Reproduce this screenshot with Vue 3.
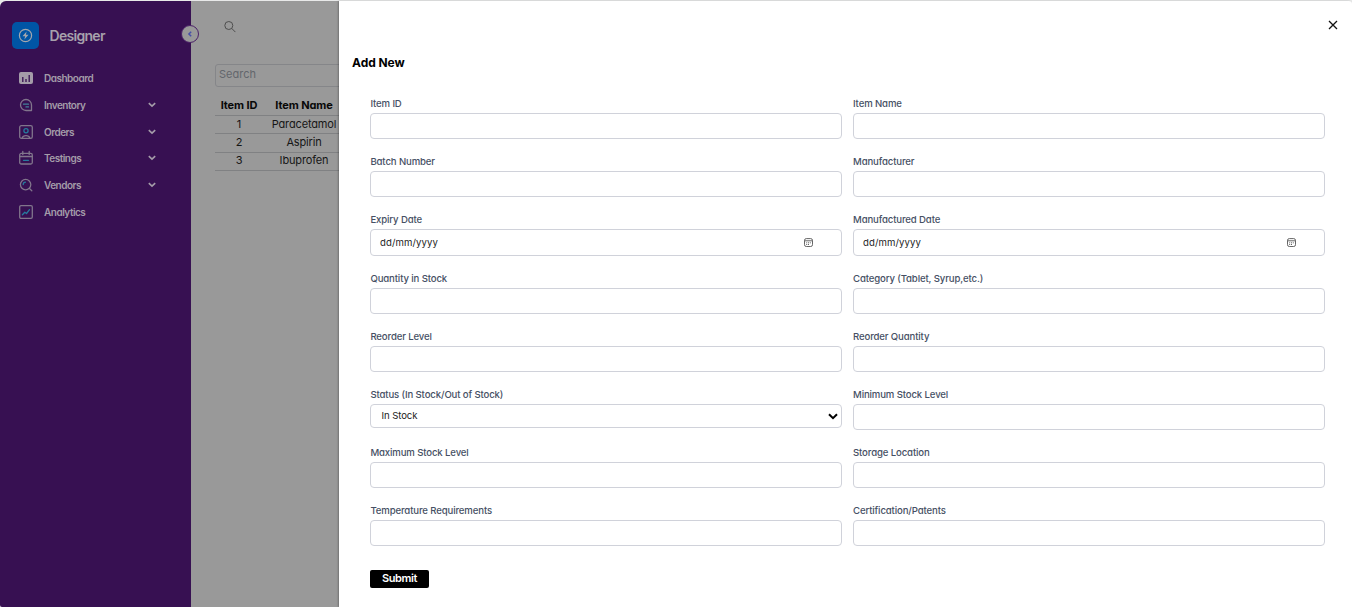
<script setup>
const nav = [
  { name: 'Dashboard', icon: 'dashboard' },
  { name: 'Inventory', icon: 'inventory', more: true },
  { name: 'Orders', icon: 'orders', more: true },
  { name: 'Testings', icon: 'testings', more: true },
  { name: 'Vendors', icon: 'vendors', more: true },
  { name: 'Analytics', icon: 'analytics' },
]
const items = ['Paracetamol', 'Aspirin', 'Ibuprofen']
const fields = [
  { label: 'Item ID' },
  { label: 'Item Name' },
  { label: 'Batch Number' },
  { label: 'Manufacturer' },
  { label: 'Expiry Date', type: 'date' },
  { label: 'Manufactured Date', type: 'date' },
  { label: 'Quantity in Stock' },
  { label: 'Category (Tablet, Syrup,etc.)' },
  { label: 'Reorder Level' },
  { label: 'Reorder Quantity' },
  { label: 'Status (In Stock/Out of Stock)', type: 'select' },
  { label: 'Minimum Stock Level' },
  { label: 'Maximum Stock Level' },
  { label: 'Storage Location' },
  { label: 'Temperature Requirements' },
  { label: 'Certification/Patents' },
]
</script>

<template>
  <div class="page">
    <aside class="sidebar">
      <div class="brand">
        <span class="logo">
          <svg width="15" height="15" viewBox="0 0 15 15" fill="none" stroke="#a4a7ad">
            <circle cx="7.5" cy="7.5" r="6.1" stroke-width="1.2" />
            <path d="M8.6 3.6 4.5 8.2h2.6l-.7 3.3 4.1-4.7H7.9z" fill="#a4a7ad" stroke="none" />
          </svg>
        </span>
        <span class="brand-name">Designer</span>
      </div>
      <nav>
        <div v-for="n in nav" :key="n.name" class="nav-item">
          <svg class="nav-icon" width="16" height="16" viewBox="0 0 16 16" fill="none" stroke="#81758c" stroke-width="1.3" stroke-linecap="round" stroke-linejoin="round">
            <template v-if="n.icon === 'dashboard'">
              <rect x="1" y="2" width="14" height="12" rx="2" fill="#a49ca9" stroke="none" />
              <path d="M4.8 7v5M8 9v3M11.2 5v7" stroke="#371052" stroke-width="1.3" stroke-linecap="butt" />
            </template>
            <template v-else-if="n.icon === 'inventory'">
              <path d="M8 2.5a5.5 5.5 0 0 0 0 11h5.5V8A5.5 5.5 0 0 0 8 2.5z" />
              <path d="M5.5 7.2h5M8 9.9h2.5" stroke="#438099" />
            </template>
            <template v-else-if="n.icon === 'orders'">
              <rect x="1.7" y="1.7" width="12.6" height="12.6" rx="1.6" />
              <path d="M4.2 14c.6-2 2-2.3 3.8-2.3s3.2.3 3.8 2.3" />
              <circle cx="8" cy="6.8" r="2.1" stroke="#277a9d" />
            </template>
            <template v-else-if="n.icon === 'testings'">
              <rect x="1.7" y="3.4" width="12.6" height="10.6" rx="1.5" />
              <path d="M4.8 1.4v3M11.2 1.4v3M1.7 6.5h12.6" />
              <path d="M5.5 10.3h5" stroke="#277a9d" />
            </template>
            <template v-else-if="n.icon === 'vendors'">
              <circle cx="7.6" cy="7.6" r="5.2" />
              <path d="m11.5 11.5 2.3 2.3" />
              <path d="M5.2 7.5a2.4 2.4 0 0 1 2.2-2.3" stroke="#277a9d" />
            </template>
            <template v-else>
              <rect x="1.7" y="1.7" width="12.6" height="12.6" rx="1.3" />
              <path d="m4.4 10.7 2.4-2.5 1.7 1.3 3-3.8" stroke="#277a9d" />
            </template>
          </svg>
          <span class="nav-name">{{ n.name }}</span>
          <svg v-if="n.more" class="chev" width="8" height="6" viewBox="0 0 8 6" fill="none" stroke="#a49ca9" stroke-width="1.6">
            <path d="m.8 1.2 3.2 3 3.2-3" />
          </svg>
        </div>
      </nav>
      <span class="collapse">
        <svg width="6" height="8" viewBox="0 0 6 8" fill="none" stroke="#4750a8" stroke-width="1.5"><path d="M4.2 1.7 1.9 4l2.3 2.3" /></svg>
      </span>
    </aside>

    <main class="list">
      <svg class="lens" width="12" height="12" viewBox="0 0 12 12" fill="none" stroke="#4e4e4e" stroke-width="1"><circle cx="4.8" cy="4.5" r="4" /><path d="m7.7 7.4 3.7 3.7" /></svg>
      <div class="search">Search</div>
      <table>
        <thead><tr><th class="c-id">Item ID</th><th>Item Name</th></tr></thead>
        <tbody>
          <tr v-for="(name, i) in items" :key="name"><td>{{ i + 1 }}</td><td>{{ name }}</td></tr>
        </tbody>
      </table>
    </main>

    <section class="drawer">
      <svg class="close" width="10" height="10" viewBox="0 0 10 10" stroke="#111" stroke-width="1.3"><path d="m1 1 8 8M9 1 1 9" /></svg>
      <h2>Add New</h2>
      <form class="fields" @submit.prevent>
        <div v-for="f in fields" :key="f.label" class="field" :class="f.type">
          <label>{{ f.label }}</label>
          <div class="box">
            <template v-if="f.type === 'date'">
              <span>dd/mm/yyyy</span>
              <svg width="9" height="9" viewBox="0 0 9 9" fill="none" stroke="#555" stroke-width=".9">
                <rect x=".5" y=".6" width="8" height="7.9" rx="1.8" />
                <path d="M.5 2.8h8" />
                <path d="M2.2 4.8h1M4 4.8h1M5.8 4.8h1M2.2 6.5h1M4 6.5h1" />
              </svg>
            </template>
            <template v-else-if="f.type === 'select'">
              <span>In Stock</span>
              <svg width="10" height="7" viewBox="0 0 10 7" fill="none" stroke="#000" stroke-width="2"><path d="m1 1.2 4 4 4-4" /></svg>
            </template>
          </div>
        </div>
      </form>
      <button class="submit">Submit</button>
    </section>
  </div>
</template>

<style>
body { margin: 0; background: #e8e9e9; overflow: hidden; }
</style>

<style scoped>
* { box-sizing: border-box; }
.page {
  display: flex;
  width: 1352px;
  height: 607px;
  padding-top: 1px;
  font-family: Inter, "Liberation Sans", sans-serif;
  font-feature-settings: "cv11";
}
.sidebar {
  position: relative;
  width: 191px;
  height: 606px;
  background: #371052;
  border-radius: 6px 0 0 2px;
  color: #a49ca9;
  flex: none;
}
.brand { display: flex; align-items: center; padding: 21px 0 0 12px; gap: 10.5px; }
.logo { width: 27px; height: 27px; border-radius: 5px; background: #0055a5; display: flex; align-items: center; justify-content: center; }
.brand-name { font-size: 14px; font-weight: 600; letter-spacing: -.7px; color: #a7a1ac; }
nav { padding: 16px 35px 0 18px; }
.nav-item { display: flex; align-items: center; height: 26.65px; font-size: 10px; font-weight: 600; }
.nav-icon { margin-right: 10px; }
.nav-name { letter-spacing: -.5px; }
.chev { margin-left: auto; }
.collapse {
  position: absolute; z-index: 1; left: 181px; top: 24px; width: 18px; height: 18px;
  border: 1px solid #4b2168; border-radius: 50%; background: #999;
  display: flex; align-items: center; justify-content: center;
}
.list { width: 148px; flex: none; background: #999; padding: 20px 0 0 24px; overflow: hidden; }
.lens { display: block; margin-left: 9px; }
.search {
  width: 200px; height: 23px; margin-top: 31px; padding: 0 3px; line-height: 19px;
  border: 1px solid #858689; border-radius: 3px; color: #63666c; font-size: 11px; letter-spacing: 0;
}
table { width: 130px; margin-top: 8px; border-collapse: separate; border-spacing: 0; table-layout: fixed; font-size: 11px; color: #161616; text-align: center; letter-spacing: -.15px; }
.c-id { width: 48px; }
th, td { padding: 0; height: 18px; line-height: 17px; border-bottom: 1px solid #808183; white-space: nowrap; }
tbody tr:nth-child(2) td { height: 19px; padding-bottom: 1px; }
tbody tr:nth-child(3) td { line-height: 15px; padding-bottom: 2px; }
th { height: 21px; line-height: 20px; font-weight: 700; color: #080808; letter-spacing: -.1px; }
.drawer {
  position: relative; flex: 1; background: #fff; padding: 54px 27px 0 31px;
  border-top-right-radius: 3px; box-shadow: -1px 0 2px rgba(0, 0, 0, .25);
}
.close { position: absolute; right: 14px; top: 19px; }
h2 { margin: 0 0 0 -18px; font-size: 12px; line-height: 16px; font-weight: 700; color: #000; letter-spacing: -.05px; }
.fields { display: grid; grid-template-columns: 472px 472px; column-gap: 11px; row-gap: 16px; margin-top: 26px; }
.field { height: 42px; }
.field.date { height: 43px; }
label { display: block; height: 16px; padding-left: .4px; line-height: 13px; font-size: 9.6px; font-weight: 500; color: #465064; letter-spacing: -.13px; }
.field:nth-child(even) label { padding-left: 0; }
.box {
  height: 26px; border: 1px solid #d0d2da; border-radius: 4px; font-size: 9.6px; color: #222;
  display: flex; align-items: center; justify-content: space-between;
}
.date .box { height: 27px; padding: 0 28px 0 9px; letter-spacing: .1px; }
.select .box { height: 24px; padding: 0 3px 0 10.5px; letter-spacing: -.1px; }
.select span { padding-bottom: 2px; }
.submit {
  display: block; margin-top: 24px; width: 59px; height: 18px; padding: 0 0 2px; border: 0; border-radius: 2px;
  background: #000; color: #fff; font: 600 11px/16px Inter, sans-serif; letter-spacing: -.4px;
}
</style>
